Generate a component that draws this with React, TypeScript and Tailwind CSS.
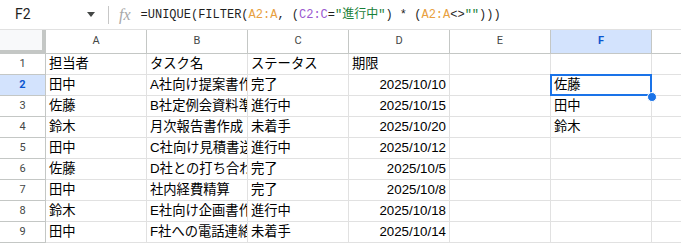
import React from "react";

const cols = ["A", "B", "C", "D", "E", "F"];
const rows: string[][] = [
  ["担当者", "タスク名", "ステータス", "期限", "", ""],
  ["田中", "A社向け提案書作成", "完了", "2025/10/10", "", "佐藤"],
  ["佐藤", "B社定例会資料準備", "進行中", "2025/10/15", "", "田中"],
  ["鈴木", "月次報告書作成", "未着手", "2025/10/20", "", "鈴木"],
  ["田中", "C社向け見積書送付", "進行中", "2025/10/12", "", ""],
  ["佐藤", "D社との打ち合わせ", "完了", "2025/10/5", "", ""],
  ["田中", "社内経費精算", "完了", "2025/10/8", "", ""],
  ["鈴木", "E社向け企画書作成", "進行中", "2025/10/18", "", ""],
  ["田中", "F社への電話連絡", "未着手", "2025/10/14", "", ""],
];

const cellFont = {
  fontFamily: '"Liberation Sans", "Noto Sans CJK JP", sans-serif',
};

export default function App() {
  return (
    <div className="w-[681px] h-[248px] overflow-hidden bg-white relative">
      {/* formula bar */}
      <div className="h-[30px] flex items-center border-b border-[#e1e1e1]">
        <div
          className="w-[80px] pl-[15px] text-[14px] text-[#1f1f1f]"
          style={{ fontFamily: "Roboto, sans-serif" }}
        >
          F2
        </div>
        <div className="w-0 h-0 border-l-[4px] border-r-[4px] border-t-[5px] border-l-transparent border-r-transparent border-t-[#444746] ml-[7px]" />
        <div className="w-px h-[18px] bg-[#c7c7c7] ml-[13px]" />
        <div
          className="ml-[10px] text-[16px] italic text-[#a8a8a8] leading-none"
          style={{ fontFamily: '"Liberation Serif", serif' }}
        >
          fx
        </div>
        <div
          className="ml-[10px] text-[12px] text-[#1f1f1f] whitespace-nowrap"
          style={{ fontFamily: '"Liberation Mono", "Noto Sans CJK JP", monospace' }}
        >
          =UNIQUE(FILTER(<span className="text-[#e8a040]">A2:A</span>, (
          <span className="text-[#9b59d0]">C2:C</span>=
          <span className="text-[#188038]">"進行中"</span>) * (
          <span className="text-[#e8a040]">A2:A</span>&lt;&gt;
          <span className="text-[#188038]">""</span>)))
        </div>
      </div>

      {/* grid */}
      <div className="grid grid-cols-[46px_101px_101px_101px_101px_101px_101px_101px]">
        {/* header row */}
        <div className="h-[24px] bg-[#f8f9fa] border-r-[4px] border-b-[4px] border-[#c4c7c5]" />
        {[...cols, ""].map((c, i) => (
          <div
            key={i}
            className={`h-[24px] border-r border-b border-[#c4c7c5] flex items-center justify-center text-[11px] ${
              c === "F" ? "bg-[#d3e3fd] text-[#0b57d0] font-bold" : "bg-white text-[#444746]"
            }`}
            style={{ fontFamily: "Roboto, sans-serif" }}
          >
            {c}
          </div>
        ))}
        {rows.map((r, ri) => (
          <React.Fragment key={ri}>
            <div
              className={`h-[21px] border-r border-b border-[#c4c7c5] flex items-center justify-center text-[11px] ${
                ri === 1 ? "bg-[#d3e3fd] text-[#0b57d0] font-bold" : "bg-white text-[#444746]"
              }`}
              style={{ fontFamily: "Roboto, sans-serif" }}
            >
              {ri + 1}
            </div>
            {[...r, ""].map((v, ci) => (
              <div
                key={ci}
                className={`relative h-[21px] border-r border-b border-[#e1e1e1] flex items-end pb-[2px] px-[3px] text-[13.3px] leading-[16px] text-black whitespace-nowrap overflow-hidden ${
                  ci === 3 && ri > 0 ? "justify-end" : ""
                }`}
                style={cellFont}
              >
                {v}
              </div>
            ))}
          </React.Fragment>
        ))}
      </div>

      {/* selection overlay on F2 */}
      <div className="absolute left-[550px] top-[74px] w-[102px] h-[22px] border-2 border-[#1a73e8] z-10" />
      <div className="absolute left-[647px] top-[92px] w-[10px] h-[10px] rounded-full bg-[#1a73e8] border border-white z-20" />
    </div>
  );
}
